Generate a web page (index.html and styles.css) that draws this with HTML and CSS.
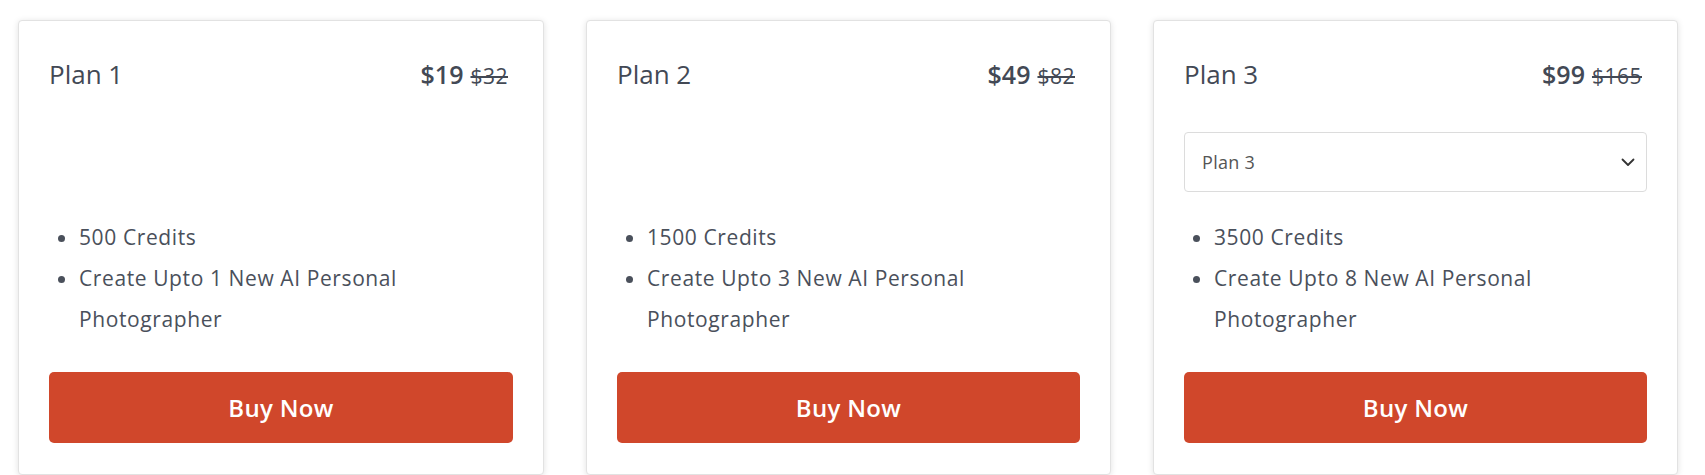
FILE: index.html
```html
<!DOCTYPE html>
<html lang="en">
<head>
<meta charset="utf-8">
<title>Plans</title>
<link rel="stylesheet" href="styles.css">
</head>
<body>
<div class="plans">
  <div class="card">
    <div class="card-head">
      <h3 class="plan-name">Plan 1</h3>
      <div class="price"><span class="now">$19</span> <s class="was">$32</s></div>
    </div>
    <div class="select-slot"></div>
    <ul class="features">
      <li>500 Credits</li>
      <li>Create Upto 1 New AI Personal Photographer</li>
    </ul>
    <button class="buy">Buy Now</button>
  </div>
  <div class="card">
    <div class="card-head">
      <h3 class="plan-name">Plan 2</h3>
      <div class="price"><span class="now">$49</span> <s class="was">$82</s></div>
    </div>
    <div class="select-slot"></div>
    <ul class="features">
      <li>1500 Credits</li>
      <li>Create Upto 3 New AI Personal Photographer</li>
    </ul>
    <button class="buy">Buy Now</button>
  </div>
  <div class="card">
    <div class="card-head">
      <h3 class="plan-name">Plan 3</h3>
      <div class="price"><span class="now">$99</span> <s class="was">$165</s></div>
    </div>
    <div class="select-slot">
      <div class="select">
        <span>Plan 3</span>
        <svg class="chev" width="14" height="9" viewBox="0 0 14 9"><path d="M1.5 1.5 L7 7 L12.5 1.5" fill="none" stroke="#333" stroke-width="1.8" stroke-linecap="round" stroke-linejoin="round"/></svg>
      </div>
    </div>
    <ul class="features">
      <li>3500 Credits</li>
      <li>Create Upto 8 New AI Personal Photographer</li>
    </ul>
    <button class="buy">Buy Now</button>
  </div>
</div>
</body>
</html>
```

FILE: styles.css
```css
* { box-sizing: border-box; }
html, body { margin: 0; padding: 0; background: #ffffff; }
body { font-family: "Open Sans", "Noto Sans", sans-serif; color: #464c58; }

.plans {
  display: grid;
  grid-template-columns: 526px 525px 525px;
  column-gap: 42px;
  padding: 20px 0 0 18px;
}

.card {
  background: #fff;
  border: 1px solid #e2e2e2;
  border-radius: 4px;
  box-shadow: 0 1px 6px rgba(0,0,0,0.12);
  padding: 27px 30px 31px 30px;
  display: flex;
  flex-direction: column;
}

.card-head {
  display: flex;
  justify-content: space-between;
  align-items: center;
  height: 52px;
  padding-right: 5px;
}

.plan-name {
  margin: 0;
  font-size: 26px;
  font-weight: 400;
  color: #434955;
}

.price { display: flex; align-items: baseline; gap: 7px; }
.now { font-size: 25px; font-weight: 600; color: #434955; }
.was { font-size: 21px; color: #434955; letter-spacing: 0.5px; }

.select-slot {
  height: 60px;
  margin-top: 32px;
}

.select {
  height: 60px;
  border: 1px solid #dcdcdc;
  border-radius: 4px;
  display: flex;
  align-items: center;
  justify-content: space-between;
  padding: 0 11px 0 17px;
  font-size: 18px;
  letter-spacing: 0.3px;
  color: #555;
}

.features {
  margin: 25px 0 32px;
  padding-left: 30px;
  font-size: 21px;
  letter-spacing: 0.6px;
  line-height: 41px;
  color: #4a505b;
}

.buy {
  height: 71px;
  border: none;
  border-radius: 5px;
  background: #d0472b;
  color: #fff;
  font-family: "Open Sans", sans-serif;
  font-size: 24px;
  font-weight: 600;
  letter-spacing: 0.3px;
  cursor: pointer;
}
```
